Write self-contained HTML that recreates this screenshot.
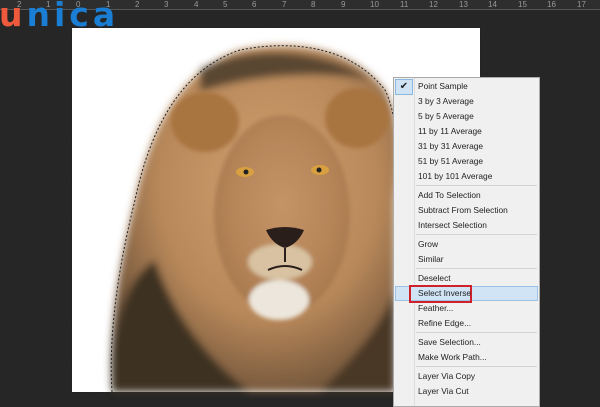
<!DOCTYPE html>
<html><head><meta charset="utf-8"><style>
*{margin:0;padding:0;box-sizing:border-box}
body{width:600px;height:400px;overflow:hidden;background:#262626;position:relative;font-family:"Liberation Sans",sans-serif}
.ruler{position:absolute;left:0;top:0;width:600px;height:10px;background:#2e2e2e;border-bottom:1px solid #555}
.rl{position:absolute;top:0;font-size:8px;color:#999}
.canvas{position:absolute;left:72px;top:28px;width:408px;height:364px;background:#fff;outline:1px dashed #222}
.logo{position:absolute;left:-1px;top:-1px;font-size:33px;line-height:32px;font-weight:bold;letter-spacing:4px;color:#1a7fd4;font-family:"DejaVu Sans",sans-serif}
.logo b{color:#f05a3c}
.menu{position:absolute;left:393px;top:77px;width:147px;height:330px;background:#f0f0f0;border:1px solid #aaa;font-size:8.4px;color:#222}
.gut{position:absolute;left:20px;top:0;width:1px;height:100%;background:#ddd}
.it{position:absolute;left:24px;height:15px;line-height:15px;white-space:nowrap}
.sep{position:absolute;left:22px;right:2px;height:1px;background:#d4d4d4}
</style></head><body>
<div class="ruler">
<span class="rl" style="left:17px">2</span><span class="rl" style="left:46px">1</span><span class="rl" style="left:76px">0</span><span class="rl" style="left:106px">1</span><span class="rl" style="left:135px">2</span><span class="rl" style="left:164px">3</span><span class="rl" style="left:194px">4</span><span class="rl" style="left:223px">5</span><span class="rl" style="left:252px">6</span><span class="rl" style="left:282px">7</span><span class="rl" style="left:311px">8</span><span class="rl" style="left:341px">9</span><span class="rl" style="left:370px">10</span><span class="rl" style="left:400px">11</span><span class="rl" style="left:429px">12</span><span class="rl" style="left:459px">13</span><span class="rl" style="left:488px">14</span><span class="rl" style="left:518px">15</span><span class="rl" style="left:547px">16</span><span class="rl" style="left:577px">17</span>
</div>
<div class="logo"><b>u</b>nica</div>
<div class="canvas"></div>
<svg style="position:absolute;left:0;top:0" width="600" height="400">
<defs>
<filter id="b4"><feGaussianBlur stdDeviation="4"/></filter>
<filter id="b2"><feGaussianBlur stdDeviation="2"/></filter>
<radialGradient id="mg" cx="0.55" cy="0.4" r="0.7"><stop offset="0" stop-color="#d0a070"/><stop offset="0.55" stop-color="#b8885a"/><stop offset="1" stop-color="#5a4430"/></radialGradient>
<radialGradient id="fg" cx="0.5" cy="0.45" r="0.55"><stop offset="0" stop-color="#c49466"/><stop offset="0.7" stop-color="#b58458"/><stop offset="1" stop-color="#a87a4e"/></radialGradient>
</defs>
<g filter="url(#b4)">
<path d="M112,392 C108,330 120,260 135,200 C150,130 180,70 240,50 C290,40 350,45 385,90 C400,120 400,160 395,200 L395,392 Z" fill="url(#mg)"/>
<path d="M112,392 C110,330 125,280 155,260 C175,320 210,360 250,392 Z" fill="#3e3024"/>
<path d="M320,392 C350,360 380,330 395,290 L395,392 Z" fill="#4a3828"/>
<path d="M200,70 C240,45 320,45 370,80 C330,72 260,72 200,92 Z" fill="#5a4632"/>
</g>
<g filter="url(#b2)">
<ellipse cx="205" cy="122" rx="34" ry="30" fill="#a8743f"/>
<ellipse cx="357" cy="118" rx="32" ry="30" fill="#a8743f"/>
<ellipse cx="282" cy="215" rx="68" ry="100" fill="url(#fg)"/>
<ellipse cx="279" cy="300" rx="30" ry="20" fill="#ece6dc"/>
<ellipse cx="280" cy="262" rx="32" ry="18" fill="#d8c2a2"/>
</g>
<ellipse cx="245" cy="172" rx="9" ry="5" fill="#d8a040"/><circle cx="246" cy="172" r="2.5" fill="#222"/>
<ellipse cx="320" cy="170" rx="9" ry="5" fill="#d8a040"/><circle cx="319" cy="170" r="2.5" fill="#222"/>
<path d="M266,230 Q285,224 304,230 Q298,244 285,248 Q272,244 266,230 Z" fill="#2a1e1a"/>
<path d="M285,248 L285,262 M268,270 Q285,262 302,270" stroke="#2a1e1a" stroke-width="2" fill="none"/>
<path d="M112,392 C108,330 120,260 135,200 C150,130 180,70 240,50 C290,40 350,45 385,90 C395,110 398,140 396,180" fill="none" stroke="#222" stroke-width="1" stroke-dasharray="2,2"/>
</svg>
<div class="menu">
<div style="position:absolute;left:1px;top:1px;width:18px;height:16px;background:#cfe3f5;border:1px solid #8ab8e0;font-size:10px;text-align:center;line-height:14px">✔</div>
<div class="gut"></div>
<div class="it" style="top:1px">Point Sample</div>
<div class="it" style="top:16px">3 by 3 Average</div>
<div class="it" style="top:31px">5 by 5 Average</div>
<div class="it" style="top:46px">11 by 11 Average</div>
<div class="it" style="top:61px">31 by 31 Average</div>
<div class="it" style="top:76px">51 by 51 Average</div>
<div class="it" style="top:91px">101 by 101 Average</div>
<div class="sep" style="top:107px"></div>
<div class="it" style="top:110px">Add To Selection</div>
<div class="it" style="top:125px">Subtract From Selection</div>
<div class="it" style="top:140px">Intersect Selection</div>
<div class="sep" style="top:156px"></div>
<div class="it" style="top:159px">Grow</div>
<div class="it" style="top:174px">Similar</div>
<div class="sep" style="top:190px"></div>
<div class="it" style="top:193px">Deselect</div>
<div style="position:absolute;left:1px;right:1px;top:208px;height:15px;background:#d0e4f6;border:1px solid #9cc2e6"></div>
<div style="position:absolute;left:15px;top:207px;width:63px;height:18px;border:2px solid #d0202a"></div>
<div class="it" style="top:208px">Select Inverse</div>
<div class="it" style="top:223px">Feather...</div>
<div class="it" style="top:238px">Refine Edge...</div>
<div class="sep" style="top:254px"></div>
<div class="it" style="top:257px">Save Selection...</div>
<div class="it" style="top:272px">Make Work Path...</div>
<div class="sep" style="top:288px"></div>
<div class="it" style="top:291px">Layer Via Copy</div>
<div class="it" style="top:306px">Layer Via Cut</div>
</div>
</body></html>
